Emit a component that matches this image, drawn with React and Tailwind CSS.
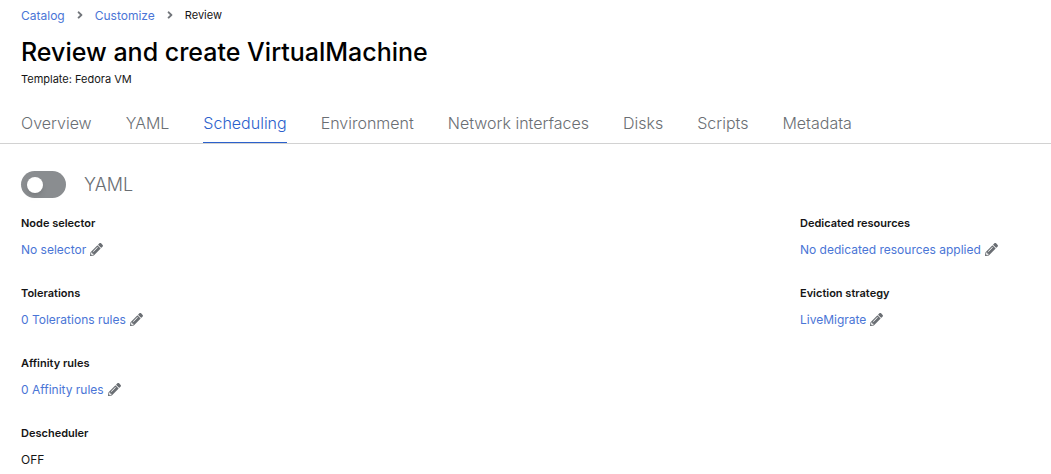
import { FaAngleRight, FaPencilAlt } from "react-icons/fa";

const tabs = [
  "Overview",
  "YAML",
  "Scheduling",
  "Environment",
  "Network interfaces",
  "Disks",
  "Scripts",
  "Metadata",
];

function Crumb({ children }) {
  return (
    <li className="flex items-center">
      <a href="#" className="text-[#4a75d6]">{children}</a>
      <FaAngleRight className="mx-2.5 mb-0.5 h-3 w-2.5 text-[#72767b]" aria-hidden="true" />
    </li>
  );
}

function Field({ label, value, editable = true }) {
  return (
    <div>
      <dt className="text-[11px] leading-4 font-semibold text-[#151515]">{label}</dt>
      <dd className="mt-[9px] text-xs leading-5">
        {editable ? (
          <button type="button" className="flex cursor-pointer items-center gap-1 text-[#4a75d6]">
            {value}
            <FaPencilAlt className="mb-0.5 size-[13px] text-[#6a6e73]" aria-hidden="true" />
          </button>
        ) : (
          <span className="text-[#151515]">{value}</span>
        )}
      </dd>
    </div>
  );
}

export default function App() {
  return (
    <main className="min-h-screen bg-white font-['Inter','Liberation_Sans',sans-serif] text-black">
      <header className="px-[21px] pt-1.5">
        <nav aria-label="Breadcrumb">
          <ol className="flex items-start text-xs leading-5">
            <Crumb>Catalog</Crumb>
            <Crumb>Customize</Crumb>
            <li aria-current="page" className="text-[11px] leading-[18px] text-[#151515]">Review</li>
          </ol>
        </nav>
        <h1 className="mt-2 text-[25px] leading-9 font-medium">Review and create VirtualMachine</h1>
        <p className="mt-px text-[11px] leading-4 text-[#151515]">Template: Fedora VM</p>
      </header>

      <div role="tablist" className="mt-5 flex gap-[34px] border-b border-[#d2d2d2] px-[21px]">
        {tabs.map((tab) => (
          <button
            key={tab}
            type="button"
            role="tab"
            aria-selected={tab === "Scheduling"}
            className={
              tab === "Scheduling"
                ? "border-b border-[#2b61cc] pt-1 pb-[7px] text-base leading-6 font-light text-[#2b61cc]"
                : "border-b border-transparent pt-1 pb-[7px] text-base leading-6 font-light text-[#6a6e73]"
            }
          >
            {tab}
          </button>
        ))}
      </div>

      <section className="px-[21px] pt-[27px]">
        <label className="flex w-fit cursor-pointer items-center gap-[18px]">
          <input type="checkbox" role="switch" className="peer sr-only" />
          <span className="flex h-[27px] w-[45px] items-center rounded-full bg-[#8a8d90] px-1.5 peer-checked:justify-end peer-checked:bg-[#2b61cc]">
            <span className="size-4 rounded-full bg-white shadow-md" />
          </span>
          <span className="text-lg leading-[27px] font-light text-[#6a6e73]">YAML</span>
        </label>

        <div className="mt-[17px] flex justify-between">
          <dl className="flex flex-col gap-[25px]">
            <Field label="Node selector" value="No selector" />
            <Field label="Tolerations" value="0 Tolerations rules" />
            <Field label="Affinity rules" value="0 Affinity rules" />
            <Field label="Descheduler" value="OFF" editable={false} />
          </dl>
          <dl className="flex w-[230px] flex-col gap-[25px]">
            <Field label="Dedicated resources" value="No dedicated resources applied" />
            <Field label="Eviction strategy" value="LiveMigrate" />
          </dl>
        </div>
      </section>
    </main>
  );
}
